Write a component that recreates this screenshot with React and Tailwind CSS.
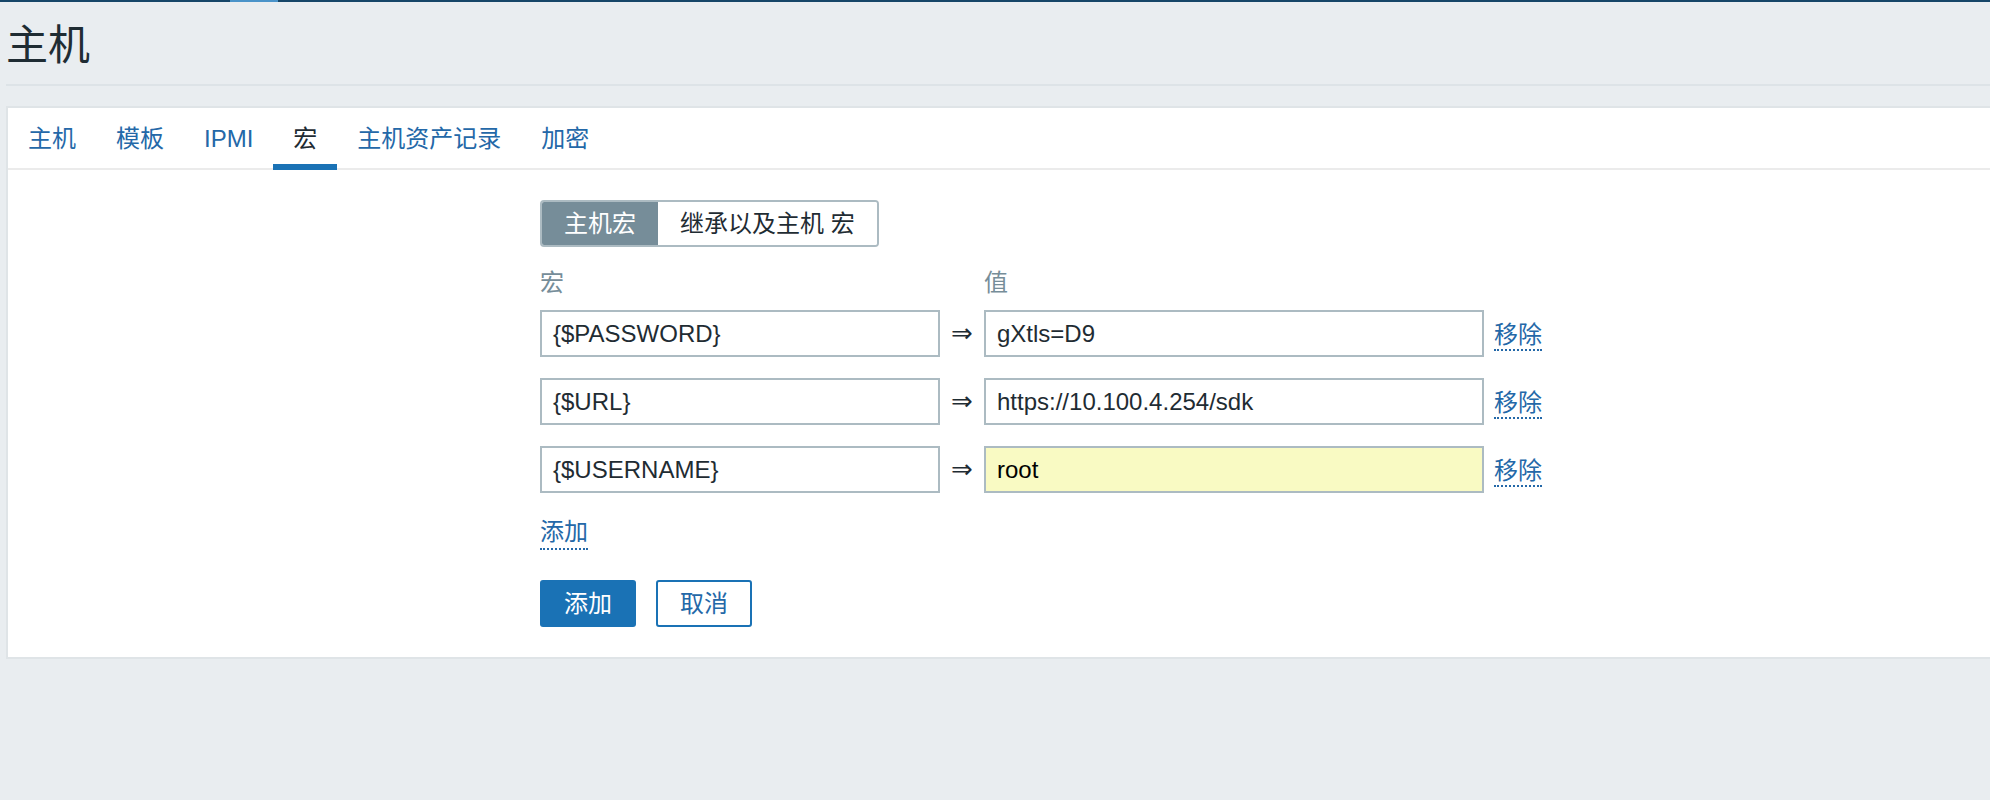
import React, { useState } from 'react';

const TABS = ['主机', '模板', 'IPMI', '宏', '主机资产记录', '加密'];

const MACROS = [
    { id: 1, macro: '{$PASSWORD}', value: 'gXtls=D9' },
    { id: 2, macro: '{$URL}', value: 'https://10.100.4.254/sdk' },
    { id: 3, macro: '{$USERNAME}', value: 'root', focused: true },
];

const FONT = "font-['Liberation_Sans','Noto_Sans_CJK_SC',sans-serif]";

const MacroRow = ({ row }) => (
    <div className="flex items-center h-[47px]">
        <div className="w-[400px] h-full border-2 border-[#acbbc2] bg-white px-[11px] flex items-center text-[24px] text-[#1f2c33]">
            {row.macro}
        </div>
        <div className="w-[44px] flex justify-center text-[26px] text-[#1f2c33] font-['DejaVu_Sans',sans-serif]">⇒</div>
        <div
            className={`w-[500px] h-full border-2 border-[#acbbc2] px-[11px] flex items-center text-[24px] ${row.focused ? 'bg-[#f9fac3] text-black' : 'bg-white text-[#1f2c33]'}`}
        >
            {row.value}
        </div>
        <span className="ml-[10px] mt-[5px] leading-[28px] text-[24px] text-[#2468a8] border-b-2 border-dotted border-[#2468a8] cursor-pointer">
            移除
        </span>
    </div>
);

export default function App() {
    const [activeTab, setActiveTab] = useState('宏');
    const [mode, setMode] = useState('host');

    return (
        <div className={`min-h-[800px] bg-[#e9edf0] ${FONT}`}>
            {/* top nav edge */}
            <div className="h-[2px] bg-[#164668] flex">
                <div className="ml-[230px] w-[48px] bg-[#4a93c9]" />
            </div>

            <div className="pl-[6px]">
                {/* header */}
                <div className="pt-[23px] pb-[17px] border-b-2 border-[#dde3e7]">
                    <h1 className="text-[42px] leading-[42px] text-[#1f2c33] font-normal">主机</h1>
                </div>

                {/* card */}
                <div className="mt-[20px] bg-white border-l-2 border-t-2 border-b-2 border-[#dfe4e7]">
                    {/* tabs */}
                    <div className="flex border-b-2 border-[#ebebeb] h-[62px]">
                        {TABS.map((tab) => (
                            <button
                                key={tab}
                                onClick={() => setActiveTab(tab)}
                                className={`px-[20px] h-[62px] text-[24px] ${activeTab === tab
                                    ? 'text-[#1f2c33] border-b-[6px] border-[#1a72b5] pt-[6px]'
                                    : 'text-[#2468a8]'
                                    }`}
                            >
                                {tab}
                            </button>
                        ))}
                    </div>

                    {/* form */}
                    <div className="pl-[532px] pt-[30px] pb-[30px]">
                        <div className="flex h-[47px] w-fit border-2 border-[#acbbc2] rounded-[4px] overflow-hidden text-[24px]">
                            <button
                                onClick={() => setMode('host')}
                                className={`px-[22px] ${mode === 'host' ? 'bg-[#768d99] text-white' : 'bg-white text-[#1f2c33]'}`}
                            >
                                主机宏
                            </button>
                            <button
                                onClick={() => setMode('inherited')}
                                className={`px-[22px] ${mode === 'inherited' ? 'bg-[#768d99] text-white' : 'bg-white text-[#1f2c33]'}`}
                            >
                                继承以及主机 宏
                            </button>
                        </div>

                        <div className="flex mt-[22px] h-[28px] items-center text-[24px] text-[#768d99]">
                            <div className="w-[444px]">宏</div>
                            <div>值</div>
                        </div>

                        <div className="mt-[13px] flex flex-col gap-[21px]">
                            {MACROS.map((row) => (
                                <MacroRow key={row.id} row={row} />
                            ))}
                        </div>

                        <div className="mt-[23px]">
                            <span className="inline-block leading-[32px] text-[24px] text-[#2468a8] border-b-2 border-dotted border-[#2468a8] cursor-pointer">
                                添加
                            </span>
                        </div>

                        <div className="mt-[30px] flex gap-[20px]">
                            <button className="h-[47px] px-[24px] rounded-[3px] bg-[#1a72b5] text-white text-[24px]">
                                添加
                            </button>
                            <button className="h-[47px] px-[22px] rounded-[3px] bg-white border-2 border-[#1a72b5] text-[#2468a8] text-[24px]">
                                取消
                            </button>
                        </div>
                    </div>
                </div>
            </div>
        </div>
    );
}
